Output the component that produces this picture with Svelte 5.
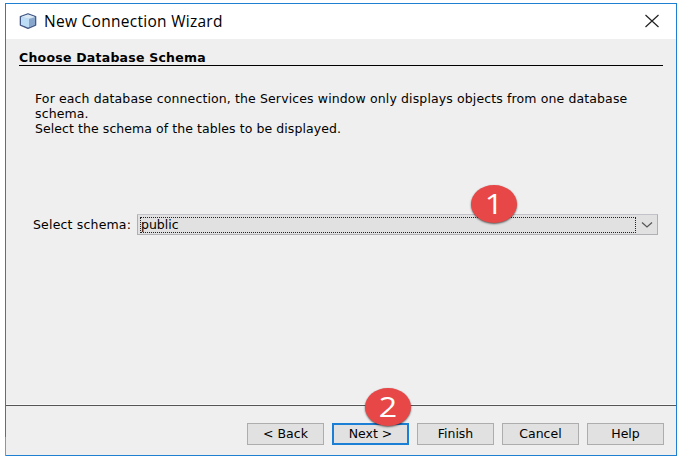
<script>
  const buttons = ['< Back', 'Next >', 'Finish', 'Cancel', 'Help'];
</script>

<main>
  <section class="window">
    <header>
      <svg class="cube" width="18" height="16" viewBox="0 0 18 16">
        <path d="M9 .8 16.6 3.6V12L9 15.3 1.4 12V3.6Z" fill="#bcd8ee" stroke="#465a86" stroke-width="1.4" stroke-linejoin="round" />
        <path d="M2.5 3.8 9 1.6 15.5 3.8 10 5.6Z" fill="#d9e8f2" />
        <path d="M2 4.2 10 6V14.2L2 11.7Z" fill="#bddcf5" />
        <path d="M10 6 16 4.2V11.7L10 14.2Z" fill="#88a6cc" />
      </svg>
      <span class="title">New Connection Wizard</span>
      <svg class="close" width="16" height="14" viewBox="0 0 16 14">
        <path d="M1.5 1 14.5 13M14.5 1 1.5 13" fill="none" stroke="#222" stroke-width="1.2" />
      </svg>
    </header>

    <div class="body">
      <h1><span>Choose Database Schema</span></h1>
      <div class="description">
        <div class="first">For each database connection, the Services window only displays objects from one database</div>
        <div class="second">schema.</div>
        <div class="third">Select the schema of the tables to be displayed.</div>
      </div>
      <div class="field">
        <span class="label">Select schema:</span>
        <div class="combo">
          <div class="value"><span>public</span></div>
          <svg width="12" height="8" viewBox="0 0 12 8">
            <path d="M1 1.5 6 6 11 1.5" fill="none" stroke="#555" stroke-width="1.2" />
          </svg>
          <b class="badge one"><span>1</span></b>
        </div>
      </div>
    </div>

    <footer>
      {#each buttons as label, i}
        <button class:primary={i === 1}><span>{label}</span>{#if i === 1}<b class="badge two"><span>2</span></b>{/if}</button>
      {/each}
    </footer>
    <i class="edge"></i>
  </section>
</main>

<style>
  main {
    box-sizing: border-box;
    width: 679px;
    height: 458px;
    padding: 3px 2px 2px 5px;
    background: #fff;
    overflow: hidden;
  }
  .window {
    position: relative;
    box-sizing: border-box;
    display: flex;
    flex-direction: column;
    width: 672px;
    height: 453px;
    border: 1px solid #1f7fd0;
    background: #efefef;
    color: #000;
    font: 12.5px/15px 'DejaVu Sans', Verdana, sans-serif;
    white-space: nowrap;
  }
  header {
    display: flex;
    align-items: center;
    box-sizing: border-box;
    height: 35px;
    padding: 0 16px 2px 13px;
    background: #fff;
  }
  .title {
    margin-left: 7px;
    font: 15.5px/20px 'Open Sans', 'Noto Sans', sans-serif;
    letter-spacing: 0.28px;
  }
  .close { margin-left: auto; }
  .body { flex: 1; }
  h1 {
    box-sizing: border-box;
    height: 27px;
    margin: 0 13px;
    padding-top: 11px;
    border-bottom: 1px solid #000;
    font-size: 12.5px;
    line-height: 15px;
    font-weight: bold;
    letter-spacing: 0.24px;
  }
  .description { padding: 25px 0 0 29px; }
  .first { letter-spacing: 0.122px; }
  .second { letter-spacing: 0.12px; }
  .third { letter-spacing: 0.07px; }
  .field {
    display: flex;
    align-items: center;
    margin: 78px 18px 0 27px;
    height: 21px;
  }
  .label { width: 104px; letter-spacing: 0.18px; }
  .combo {
    position: relative;
    box-sizing: border-box;
    display: flex;
    align-items: center;
    width: 521px;
    height: 21px;
    padding: 0 3px 0 2px;
    border: 1px solid #b0b0b4;
    border-top-color: #c2c2c8;
    background: #e1e1e1;
  }
  .value {
    box-sizing: border-box;
    width: 496px;
    height: 16px;
    border: 1px dotted #222;
    line-height: 14px;
  }
  .combo svg { margin-left: 5px; }
  footer {
    display: flex;
    box-sizing: border-box;
    gap: 8px;
    justify-content: flex-end;
    height: 50px;
    padding: 17px 12px 0 0;
    border-top: 1px solid #555;
    box-shadow: 0 -1px #f8f8f8;
  }
  button {
    position: relative;
    box-sizing: border-box;
    width: 77px;
    height: 22px;
    padding: 0;
    border: 1px solid #adadad;
    background: #e1e1e1;
    color: #000;
    font: inherit;
    line-height: 18px;
  }
  .primary { border: 2px solid #1b80d5; }
  .badge {
    position: absolute;
    width: 46px;
    height: 38px;
    border-radius: 50%;
    background: #e84747;
    box-shadow: 0 1px 2px #0009;
    color: #fff;
    font: 28px/37px 'Open Sans', 'Noto Sans', sans-serif;
    text-align: center;
  }
  .badge span {
    display: block;
    transform: scaleX(1.15);
  }
  .one { left: 333px; top: -30px; }
  .two { left: 31px; top: -37px; }
  .edge {
    position: absolute;
    left: -1px;
    bottom: -1px;
    width: 1px;
    height: 19px;
    background: #e08040;
  }
</style>
